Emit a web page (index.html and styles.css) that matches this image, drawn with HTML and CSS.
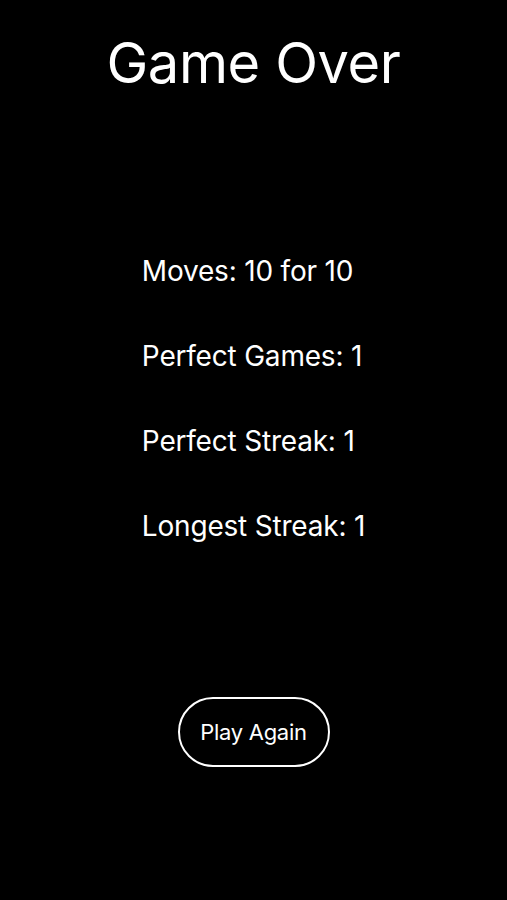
FILE: index.html
```html
<!DOCTYPE html>
<html lang="en">
<head>
    <meta charset="UTF-8">
    <meta name="viewport" content="width=device-width, initial-scale=1.0">
    <title>Game Over</title>
    <link rel="stylesheet" href="styles.css">
</head>
<body>
    <div class="screen">
        <h1 class="title">Game Over</h1>

        <ul class="stats">
            <li>Moves: 10 for 10</li>
            <li>Perfect Games: 1</li>
            <li>Perfect Streak: 1</li>
            <li>Longest Streak: 1</li>
        </ul>

        <button type="button" class="play-again">Play Again</button>
    </div>
</body>
</html>
```

FILE: styles.css
```css
body {
    margin: 0;
    padding: 0;
    background-color: #000;
    color: #fff;
    font-family: Inter, "Noto Sans", sans-serif;
    height: 100vh;
}

.screen {
    display: flex;
    flex-direction: column;
    align-items: center;
}

.title {
    margin: 30px 0 0;
    font-size: 56px;
    font-weight: 400;
    line-height: 66px;
    letter-spacing: -0.4px;
}

.stats {
    list-style: none;
    margin: 157px 0 0;
    padding: 0;
    display: flex;
    flex-direction: column;
    gap: 49px;
}

.stats li {
    font-size: 28px;
    line-height: 36px;
    letter-spacing: -0.2px;
}

.play-again {
    margin-top: 153px;
    width: 152px;
    height: 70px;
    background: transparent;
    color: #fff;
    border: 2px solid #fff;
    border-radius: 35px;
    font-family: Inter, "Noto Sans", sans-serif;
    font-size: 22px;
    letter-spacing: -0.3px;
}
```
